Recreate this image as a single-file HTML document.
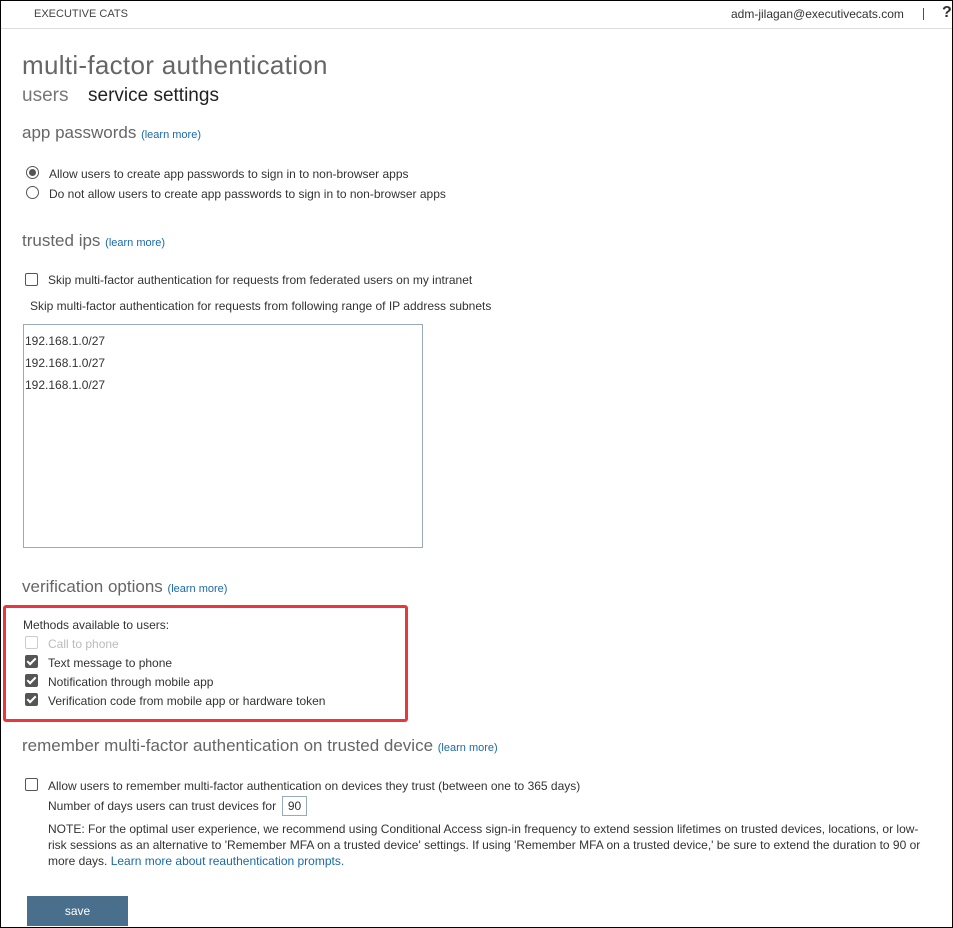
<!DOCTYPE html>
<html><head><style>
body{margin:0;width:953px;height:928px;overflow:hidden;background:#fff;font-family:"Liberation Sans",sans-serif;color:#333;position:relative}
.frame{position:absolute;left:0;top:0;width:951px;height:926px;border:1px solid #000}
.a{position:absolute;white-space:nowrap}
.s{font-size:12px;color:#333}
.h{font-size:17px;color:#666}
.lm{font-size:11px;color:#1a6aa8}
.cb{position:absolute;width:11px;height:11px;border:1px solid #555;border-radius:2px;background:#fff}
.ck{background:#555;border-color:#555}
.ck:after{content:"";position:absolute;left:3px;top:0px;width:3px;height:7px;border:solid #fff;border-width:0 2px 2px 0;transform:rotate(45deg)}
.rd{position:absolute;width:11px;height:11px;border:1px solid #555;border-radius:50%}
</style></head><body>
<div class="frame"></div>
<div class="a" style="left:34px;top:8px;font-size:11px;color:#444">EXECUTIVE CATS</div>
<div class="a" style="left:731px;top:7px;font-size:12px;color:#333">adm-jilagan@executivecats.com</div>
<div style="position:absolute;left:923px;top:8px;width:1px;height:12px;background:#7a2a8a"></div>
<div class="a" style="left:942px;top:4px;font-size:16px;font-weight:bold;color:#333">?</div>
<div style="position:absolute;left:1px;top:28px;width:951px;height:1px;background:#ddd"></div>
<div class="a" style="left:22px;top:50px;font-size:26px;color:#666;letter-spacing:0.3px">multi-factor authentication</div>
<div class="a" style="left:22px;top:85px;font-size:19px;color:#777">users</div>
<div class="a" style="left:88px;top:85px;font-size:19px;color:#222">service settings</div>
<div class="a h" style="left:22px;top:123px">app passwords <span class="lm">(learn more)</span></div>
<div class="rd" style="left:26px;top:166px"><div style="position:absolute;left:2px;top:2px;width:7px;height:7px;border-radius:50%;background:#555"></div></div>
<div class="a s" style="left:49px;top:167px">Allow users to create app passwords to sign in to non-browser apps</div>
<div class="rd" style="left:26px;top:186px"></div>
<div class="a s" style="left:49px;top:187px">Do not allow users to create app passwords to sign in to non-browser apps</div>
<div class="a h" style="left:22px;top:231px">trusted ips <span class="lm">(learn more)</span></div>
<div class="cb" style="left:25px;top:273px"></div>
<div class="a s" style="left:48px;top:273px">Skip multi-factor authentication for requests from federated users on my intranet</div>
<div class="a s" style="left:30px;top:299px">Skip multi-factor authentication for requests from following range of IP address subnets</div>
<div style="position:absolute;left:23px;top:324px;width:398px;height:222px;border:1px solid #9ab"></div>
<div class="a s" style="left:25px;top:330px;line-height:22px">192.168.1.0/27<br>192.168.1.0/27<br>192.168.1.0/27</div>
<div class="a h" style="left:22px;top:577px">verification options <span class="lm">(learn more)</span></div>
<div style="position:absolute;left:3px;top:605px;width:399px;height:111px;border:3px solid #e8383d;border-radius:3px"></div>
<div class="a s" style="left:23px;top:618px">Methods available to users:</div>
<div class="cb" style="left:25px;top:636px;border-color:#ccc"></div>
<div class="a s" style="left:48px;top:637px;color:#bbb">Call to phone</div>
<div class="cb ck" style="left:25px;top:655px"></div>
<div class="a s" style="left:48px;top:656px">Text message to phone</div>
<div class="cb ck" style="left:25px;top:674px"></div>
<div class="a s" style="left:48px;top:675px">Notification through mobile app</div>
<div class="cb ck" style="left:25px;top:693px"></div>
<div class="a s" style="left:48px;top:694px">Verification code from mobile app or hardware token</div>
<div class="a h" style="left:22px;top:736px">remember multi-factor authentication on trusted device <span class="lm">(learn more)</span></div>
<div class="cb" style="left:25px;top:778px"></div>
<div class="a s" style="left:48px;top:779px">Allow users to remember multi-factor authentication on devices they trust (between one to 365 days)</div>
<div class="a s" style="left:48px;top:799px">Number of days users can trust devices for</div>
<div style="position:absolute;left:282px;top:796px;width:23px;height:18px;border:1px solid #9ab;font-size:12px;line-height:18px;text-align:center">90</div>
<div class="s" style="position:absolute;left:48px;top:821px;width:890px;line-height:16px">NOTE: For the optimal user experience, we recommend using Conditional Access sign-in frequency to extend session lifetimes on trusted devices, locations, or low-<br>risk sessions as an alternative to 'Remember MFA on a trusted device' settings. If using 'Remember MFA on a trusted device,' be sure to extend the duration to 90 or more days. <span style="color:#1a6aa8">Learn more about reauthentication prompts.</span></div>
<div style="position:absolute;left:27px;top:896px;width:101px;height:30px;background:#4a6f8c;color:#fff;font-size:12px;text-align:center;line-height:30px">save</div>
</body></html>
